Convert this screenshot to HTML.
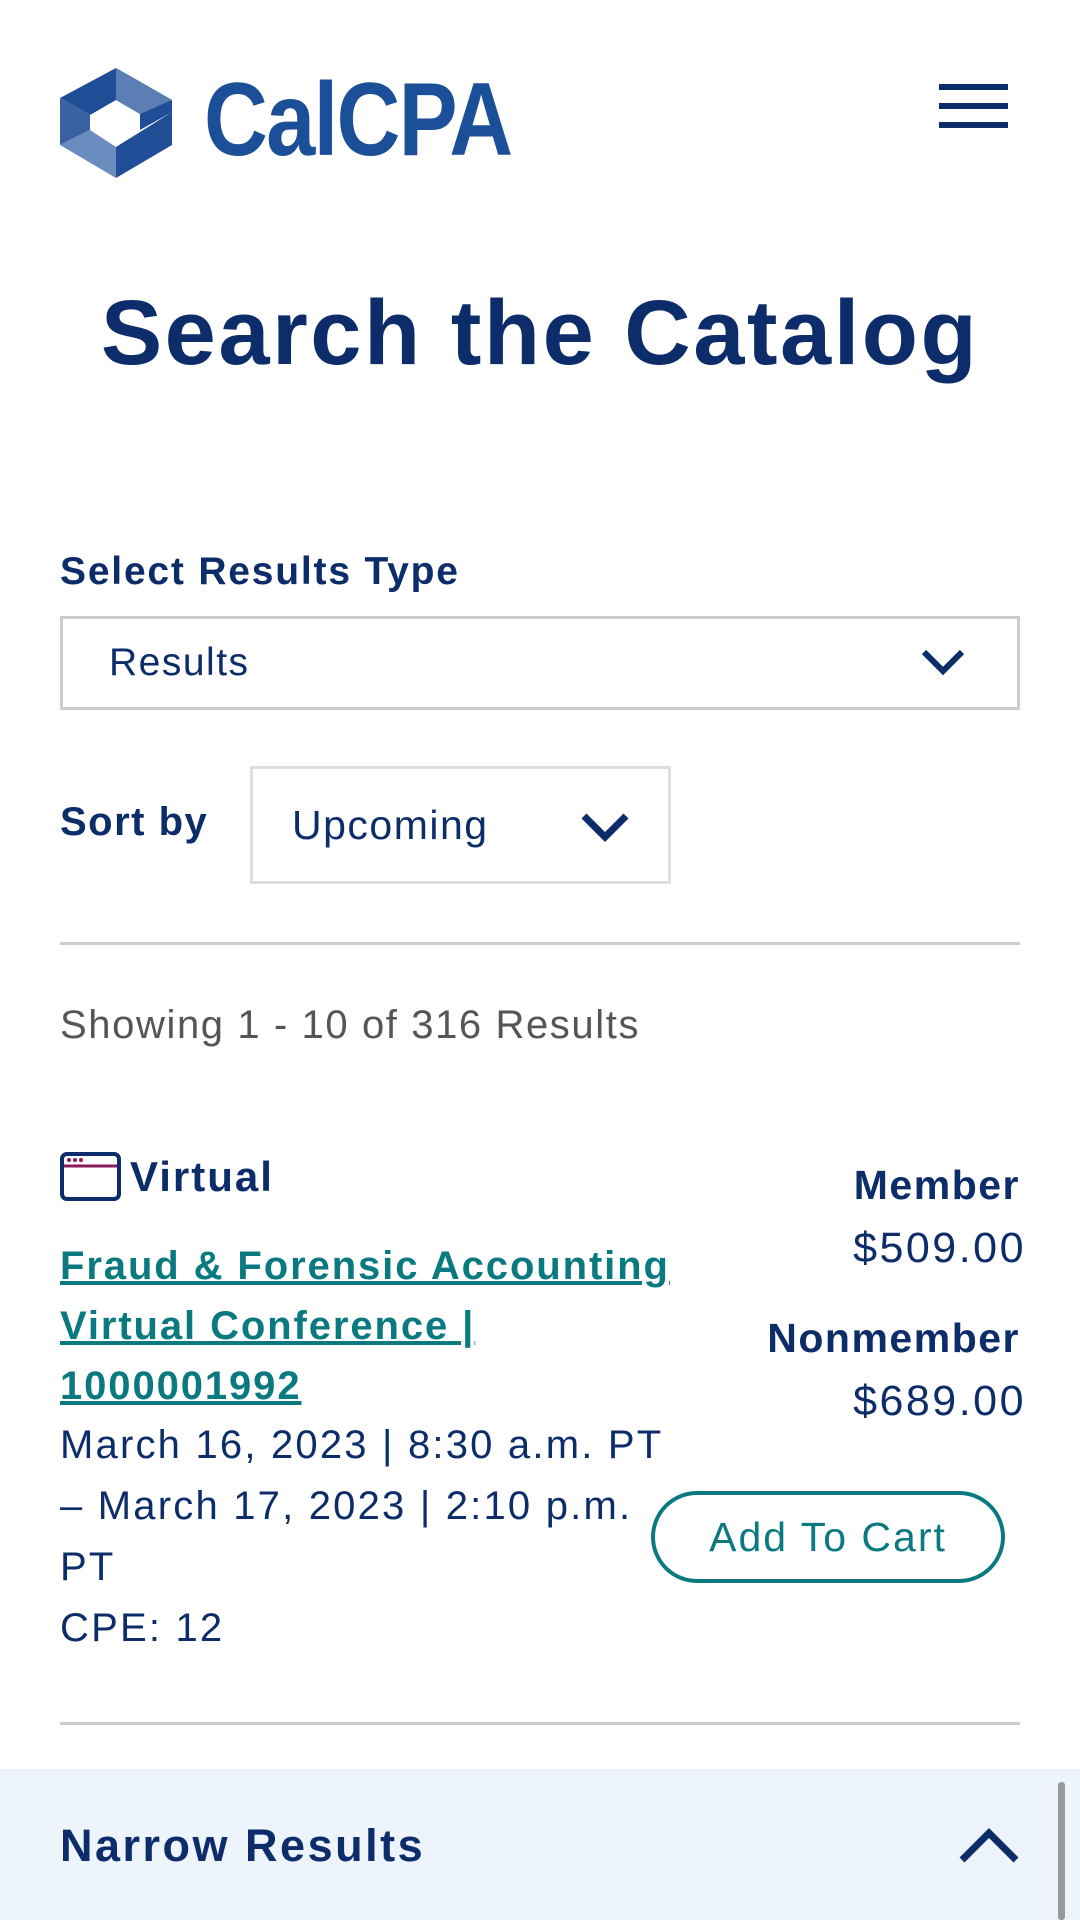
<!DOCTYPE html>
<html><head><meta charset="utf-8"><style>
*{margin:0;padding:0;box-sizing:border-box}
body{width:1080px;height:1920px;overflow:hidden;background:#fff;font-family:"Liberation Sans",sans-serif;color:#0c2c6a;position:relative}
.a{position:absolute;white-space:nowrap}
</style></head><body>
<svg class="a" style="left:60px;top:68px" width="112" height="110" viewBox="0 0 112 110">
<polygon points="56,0 112,32 112,44 80,62 80,46 56,32 30,47 0,30" fill="#1f4e96"/>
<polygon points="56,0 112,32 80,46 56,32" fill="#5b7fb5"/>
<polygon points="0,30 0,77 30,62 30,47" fill="#3a62a3"/>
<polygon points="0,77 56,110 56,79 30,62" fill="#6b8cbf"/>
<polygon points="56,110 112,77 112,44 56,79" fill="#1f4e96"/>
</svg>
<div class="a" style="left:204px;top:60px;font-size:104px;font-weight:bold;color:#1b4f98;letter-spacing:-2px;transform:scaleX(0.85);transform-origin:left top;line-height:120px">CalCPA</div>
<div class="a" style="left:939px;top:84px;width:69px;height:6px;background:#0c2c6a"></div>
<div class="a" style="left:939px;top:103px;width:69px;height:6px;background:#0c2c6a"></div>
<div class="a" style="left:939px;top:122px;width:69px;height:6px;background:#0c2c6a"></div>
<div class="a" style="left:0;width:1080px;text-align:center;top:278px;font-size:92px;font-weight:bold;line-height:110px;letter-spacing:2.5px">Search the Catalog</div>
<div class="a" style="left:60px;top:550px;font-size:39px;font-weight:bold;letter-spacing:1.8px">Select Results Type</div>
<div class="a" style="left:60px;top:616px;width:960px;height:94px;border:3px solid #ccc"></div>
<div class="a" style="left:109px;top:641px;font-size:39px;letter-spacing:1.5px">Results</div>
<svg class="a" style="left:920px;top:648px" width="46" height="28"><polyline points="4,4 23,23 42,4" fill="none" stroke="#0c2c6a" stroke-width="6"/></svg>
<div class="a" style="left:60px;top:800px;font-size:40px;font-weight:bold;letter-spacing:1.5px">Sort by</div>
<div class="a" style="left:250px;top:766px;width:421px;height:118px;border:3px solid #ddd"></div>
<div class="a" style="left:292px;top:802px;font-size:41px;letter-spacing:1.5px">Upcoming</div>
<svg class="a" style="left:580px;top:812px" width="50" height="30"><polyline points="4,4 25,25 46,4" fill="none" stroke="#0c2c6a" stroke-width="7"/></svg>
<div class="a" style="left:60px;top:942px;width:960px;height:3px;background:#ccc"></div>
<div class="a" style="left:60px;top:1003px;font-size:40px;color:#555;letter-spacing:1.6px">Showing 1 - 10 of 316 Results</div>
<svg class="a" style="left:60px;top:1152px" width="61" height="49"><rect x="2" y="2" width="57" height="45" rx="5" fill="none" stroke="#0c2c6a" stroke-width="4"/><line x1="4" y1="14" x2="57" y2="14" stroke="#8a1a5c" stroke-width="3"/><circle cx="9" cy="8" r="2" fill="#8a1a5c"/><circle cx="15" cy="8" r="2" fill="#8a1a5c"/><circle cx="21" cy="8" r="2" fill="#8a1a5c"/></svg>
<div class="a" style="left:130px;top:1153px;font-size:42px;font-weight:bold;letter-spacing:2px">Virtual</div>
<div class="a" style="left:60px;top:1236px;font-size:40px;font-weight:bold;color:#0b7a80;text-decoration:underline;line-height:60px;letter-spacing:1.9px">Fraud &amp; Forensic Accounting<br>Virtual Conference |<br>1000001992</div>
<div class="a" style="left:60px;top:1415px;font-size:40px;line-height:61px;letter-spacing:2.2px">March 16, 2023 | 8:30 a.m. PT<br>– March 17, 2023 | 2:10 p.m.<br>PT<br>CPE: 12</div>
<div class="a" style="right:60px;top:1162px;font-size:41px;font-weight:bold;letter-spacing:1.5px">Member</div>
<div class="a" style="right:54px;top:1224px;font-size:43px;letter-spacing:2.5px">$509.00</div>
<div class="a" style="right:60px;top:1315px;font-size:41px;font-weight:bold;letter-spacing:1.5px">Nonmember</div>
<div class="a" style="right:54px;top:1377px;font-size:43px;letter-spacing:2.5px">$689.00</div>
<div class="a" style="left:651px;top:1491px;width:354px;height:92px;border:4px solid #0b7a80;border-radius:46px;text-align:center;line-height:84px;font-size:41px;color:#0b7a80;letter-spacing:2px">Add To Cart</div>
<div class="a" style="left:60px;top:1722px;width:960px;height:3px;background:#ccc"></div>
<div class="a" style="left:0;top:1769px;width:1080px;height:151px;background:#eef4fc"></div>
<div class="a" style="left:60px;top:1820px;font-size:45px;font-weight:bold;letter-spacing:2.5px">Narrow Results</div>
<svg class="a" style="left:958px;top:1826px" width="62" height="38"><polyline points="4,34 31,7 58,34" fill="none" stroke="#0c2c6a" stroke-width="7"/></svg>
<div class="a" style="left:1058px;top:1782px;width:7px;height:138px;background:#999;border-radius:3px"></div>
</body></html>
